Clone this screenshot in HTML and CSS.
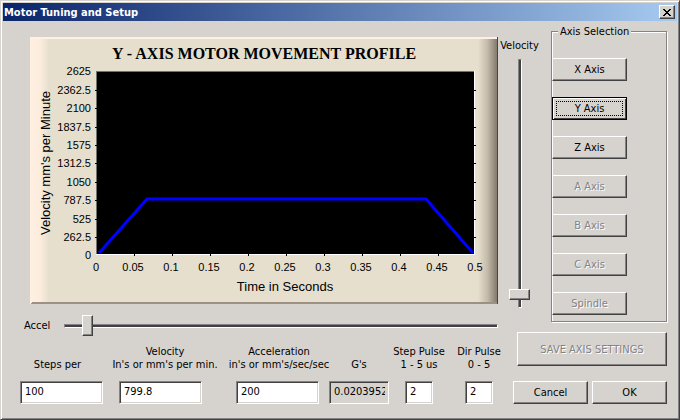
FILE: index.html
```html
<!doctype html>
<html lang="en-US">

  <head>
    <meta charset="utf-8">
    <meta name="viewport" content="width=device-width, initial-scale=1">
    <title>Motor Tuning and Setup</title>
    <link rel="stylesheet" href="styles.css">
  </head>

  <body>
    <form class="window">
      <header class="titlebar">
        <h1>Motor Tuning and Setup</h1>
        <button type="button" class="close" aria-label="Close">
          <svg width="8" height="7" viewBox="0 0 8 7" shape-rendering="crispEdges">
            <path d="M0 0h2v1h1v1h2v-1h1v-1h2v1h-1v1h-1v1h-1v1h1v1h1v1h1v1h-2v-1h-1v-1h-2v1h-1v1h-2v-1h1v-1h1v-1h1v-1h-1v-1h-1v-1h-1z"/>
          </svg>
        </button>
      </header>

      <main class="content">
        <section class="left">
          <svg class="chart" viewBox="0 0 468 267" role="img" aria-label="Motor movement profile">
            <defs>
              <linearGradient id="bevel-left">
                <stop offset="0" stop-color="#fff0e2"/>
                <stop offset=".55" stop-color="#fbecdc"/>
                <stop offset="1" stop-color="#e6dfce"/>
              </linearGradient>
              <linearGradient id="bevel-right">
                <stop offset="0" stop-color="#e6dfce"/>
                <stop offset=".5" stop-color="#c4baaa"/>
                <stop offset="1" stop-color="#82796f"/>
              </linearGradient>
            </defs>
            <g shape-rendering="crispEdges">
              <rect width="468" height="267" fill="#e6dfce"/>
              <rect width="19" height="267" fill="url(#bevel-left)"/>
              <path fill="url(#bevel-right)" d="M448 2h19v263h-19z"/>
              <path fill="#fff0e2" d="M0 0h468l-2 2h-466z"/>
              <path fill="#9c9184" d="M2 265h466v2h-468z"/>
              <path fill="#4a4541" d="M467 0h1v267h-1z"/>
              <rect x="66" y="34" width="379" height="184" fill="#fff"/>
              <path fill="#74726c" d="M66 34h378v1h-377v182h-1z"/>
              <rect x="67" y="35" width="377" height="182"/>
              <path class="ticks" d="M65 53.5h2M65 71.5h2M65 90.5h2M65 108.5h2M65 126.5h2M65 145.5h2M65 163.5h2M65 182.5h2M65 200.5h2
                M444 53.5h2M444 71.5h2M444 90.5h2M444 108.5h2M444 126.5h2M444 145.5h2M444 163.5h2M444 182.5h2M444 200.5h2
                M104.5 217v2M142.5 217v2M180.5 217v2M218.5 217v2M256.5 217v2M294.5 217v2M332.5 217v2M370.5 217v2M408.5 217v2"/>
            </g>
            <polyline class="profile" points="69,216 117,162 396,162 443,216"/>
            <text class="chart-title" x="234" y="22">Y - AXIS MOTOR MOVEMENT PROFILE</text>
            <g class="y-labels">
              <text x="61" y="38">2625</text>
              <text x="61" y="57">2362.5</text>
              <text x="61" y="75">2100</text>
              <text x="61" y="94">1837.5</text>
              <text x="61" y="112">1575</text>
              <text x="61" y="130">1312.5</text>
              <text x="61" y="149">1050</text>
              <text x="61" y="167">787.5</text>
              <text x="61" y="186">525</text>
              <text x="61" y="204">262.5</text>
              <text x="61" y="222">0</text>
            </g>
            <g class="x-labels">
              <text x="66" y="234">0</text>
              <text x="103" y="234">0.05</text>
              <text x="141" y="234">0.1</text>
              <text x="179" y="234">0.15</text>
              <text x="217" y="234">0.2</text>
              <text x="255" y="234">0.25</text>
              <text x="293" y="234">0.3</text>
              <text x="331" y="234">0.35</text>
              <text x="369" y="234">0.4</text>
              <text x="407" y="234">0.45</text>
              <text x="445" y="234">0.5</text>
            </g>
            <text class="axis-title" x="255" y="254">Time in Seconds</text>
            <text class="axis-title" transform="translate(20 126) rotate(-90)">Velocity mm's per Minute</text>
          </svg>

          <div class="accel">
            <label for="accel-slider">Accel</label>
            <input type="range" id="accel-slider" min="0" max="100" value="4">
          </div>

          <div class="fields">
            <div class="field steps">
              <label for="steps">Steps per</label>
              <input type="text" id="steps" value="100">
            </div>
            <div class="field velocity">
              <label for="velocity">Velocity<br>In's or mm's per min.</label>
              <input type="text" id="velocity" value="799.8">
            </div>
            <div class="field acceleration">
              <label for="acceleration">Acceleration<br>in's or mm's/sec/sec</label>
              <input type="text" id="acceleration" value="200">
            </div>
            <div class="field gs">
              <label for="gs">G's</label>
              <input type="text" id="gs" value="0.0203952" readonly>
            </div>
            <div class="field pulse">
              <label for="step-pulse">Step Pulse<br>1 - 5 us</label>
              <input type="text" id="step-pulse" value="2">
            </div>
            <div class="field pulse">
              <label for="dir-pulse">Dir Pulse<br>0 - 5</label>
              <input type="text" id="dir-pulse" value="2">
            </div>
          </div>
        </section>

        <section class="right">
          <div class="selection">
            <div class="speed">
              <label for="velocity-slider">Velocity</label>
              <input type="range" id="velocity-slider" min="0" max="100" value="3">
            </div>
            <fieldset>
              <legend>Axis Selection</legend>
              <button type="button">X Axis</button>
              <button type="button" class="current">Y Axis</button>
              <button type="button">Z Axis</button>
              <button type="button" disabled>A Axis</button>
              <button type="button" disabled>B Axis</button>
              <button type="button" disabled>C Axis</button>
              <button type="button" disabled>Spindle</button>
            </fieldset>
          </div>
          <button type="button" class="save" disabled>SAVE AXIS SETTINGS</button>
          <div class="actions">
            <button type="button">Cancel</button>
            <button type="button">OK</button>
          </div>
        </section>
      </main>
    </form>
  </body>

</html>
```
FILE: styles.css
```css
* {
  box-sizing: border-box;
}

html,
body {
  margin: 0;
  height: 100%;
}

body,
input,
button {
  font-family: "DejaVu Sans Condensed", Tahoma, sans-serif;
  font-size: 11px;
  line-height: 13px;
  color: #000;
}

.window {
  min-height: 100%;
  padding: 1px;
  background: #d6d3ce;
  border: 1px solid #d6d3ce;
  border-right-color: #424142;
  border-bottom-color: #424142;
  box-shadow: inset 1px 1px #fff, inset -1px -1px #848284;
}

.titlebar {
  display: flex;
  align-items: center;
  justify-content: space-between;
  height: 18px;
  margin: 1px 1px 0;
  padding: 0 2px 0 1px;
  background: linear-gradient(to right, #0a246a, #a6caf0);
}

h1 {
  margin: 0;
  font-size: 11px;
  color: #fff;
}

button {
  width: 75px;
  height: 23px;
  padding: 0;
  background: #d6d3ce;
  border: 1px solid;
  border-color: #fff #424142 #424142 #fff;
  box-shadow: inset -1px -1px #848284;
}

button:disabled {
  color: #848284;
  text-shadow: 1px 1px #fff;
}

.close {
  display: flex;
  align-items: center;
  justify-content: center;
  width: 16px;
  height: 14px;
}

.content {
  display: flex;
  padding: 4px 11px 0 18px;
}

.left {
  flex: 1;
  min-width: 0;
}

.chart {
  display: block;
  width: calc(100% - 10px);
  margin: 12px 0 0 10px;
}

.ticks {
  stroke: #000;
}

.profile {
  fill: none;
  stroke: #00f;
  stroke-width: 3;
}

.chart text {
  font-family: "Liberation Sans", Arial, sans-serif;
  font-size: 11px;
  text-anchor: middle;
}

.chart .y-labels text {
  text-anchor: end;
}

.chart .axis-title {
  font-size: 13px;
}

.chart .chart-title {
  font-family: "Liberation Serif", "Times New Roman", serif;
  font-size: 16px;
  font-weight: bold;
}

.accel {
  display: flex;
  align-items: center;
  height: 21px;
  margin-top: 11px;
  padding-left: 4px;
}

.accel label {
  width: 40px;
}

input[type="range"] {
  appearance: none;
  margin: 0;
  background: none;
}

#accel-slider {
  flex: 1;
  height: 21px;
}

#velocity-slider {
  flex: 1;
  width: 21px;
  writing-mode: vertical-lr;
  direction: rtl;
}

input[type="range"]::-webkit-slider-runnable-track {
  background: #424142;
  border: 1px solid;
  border-color: #848284 #fff #fff #848284;
}

#accel-slider::-webkit-slider-runnable-track {
  height: 4px;
}

#velocity-slider::-webkit-slider-runnable-track {
  width: 4px;
}

input[type="range"]::-webkit-slider-thumb {
  appearance: none;
  background: #d6d3ce;
  border: 1px solid;
  border-color: #fff #424142 #424142 #fff;
  box-shadow: inset -1px -1px #848284;
}

#accel-slider::-webkit-slider-thumb {
  width: 11px;
  height: 21px;
  margin-top: -10px;
}

#velocity-slider::-webkit-slider-thumb {
  width: 21px;
  height: 11px;
  margin-left: -10px;
}

.fields {
  display: flex;
  margin-top: 9px;
}

.field {
  display: flex;
  flex-direction: column;
  flex-shrink: 0;
  justify-content: flex-end;
  gap: 10px;
}

.field label {
  align-self: center;
  text-align: center;
  white-space: nowrap;
}

.field input {
  width: 83px;
  height: 23px;
  padding: 0 3px 2px 4px;
  background: #fff;
  border: 1px solid;
  border-color: #848284 #fff #fff #848284;
  box-shadow: inset 1px 1px #424142, inset -1px -1px #d6d3ce;
}

.field input:read-only {
  width: 60px;
  background: #d6d3ce;
}

.field.pulse input {
  width: 28px;
}

.steps {
  width: 75px;
  margin-right: 24px;
}

.velocity {
  width: 92px;
  margin-right: 25px;
}

.acceleration {
  width: 86px;
  margin-right: 7px;
}

.gs {
  width: 60px;
  margin-right: 12px;
}

.pulse {
  align-items: center;
  width: 36px;
  margin-right: 24px;
}

.pulse:last-child {
  margin-right: 0;
}

.right {
  display: flex;
  flex-direction: column;
  align-items: flex-end;
  flex-shrink: 0;
  width: 169px;
}

.selection {
  display: flex;
  width: 100%;
}

.speed {
  display: flex;
  flex-direction: column;
  align-items: center;
  gap: 7px;
  width: 53px;
  padding: 14px 10px 14px 0;
}

fieldset {
  flex: 1;
  display: flex;
  flex-direction: column;
  gap: 16px;
  min-width: 0;
  margin: 0;
  padding: 20px 0 6px;
  border: 1px solid #848284;
  box-shadow: inset 1px 1px #fff, 1px 1px #fff;
}

legend {
  margin-left: 6px;
  padding: 0 2px;
  background: #d6d3ce;
}

.current {
  border-color: #000;
  box-shadow: inset 1px 1px #fff, inset -1px -1px #424142;
  outline: 1px dotted #000;
  outline-offset: -5px;
}

.save {
  width: 150px;
  height: 34px;
  margin-top: 10px;
}

.actions {
  display: flex;
  gap: 4px;
  margin-top: 15px;
}
```
